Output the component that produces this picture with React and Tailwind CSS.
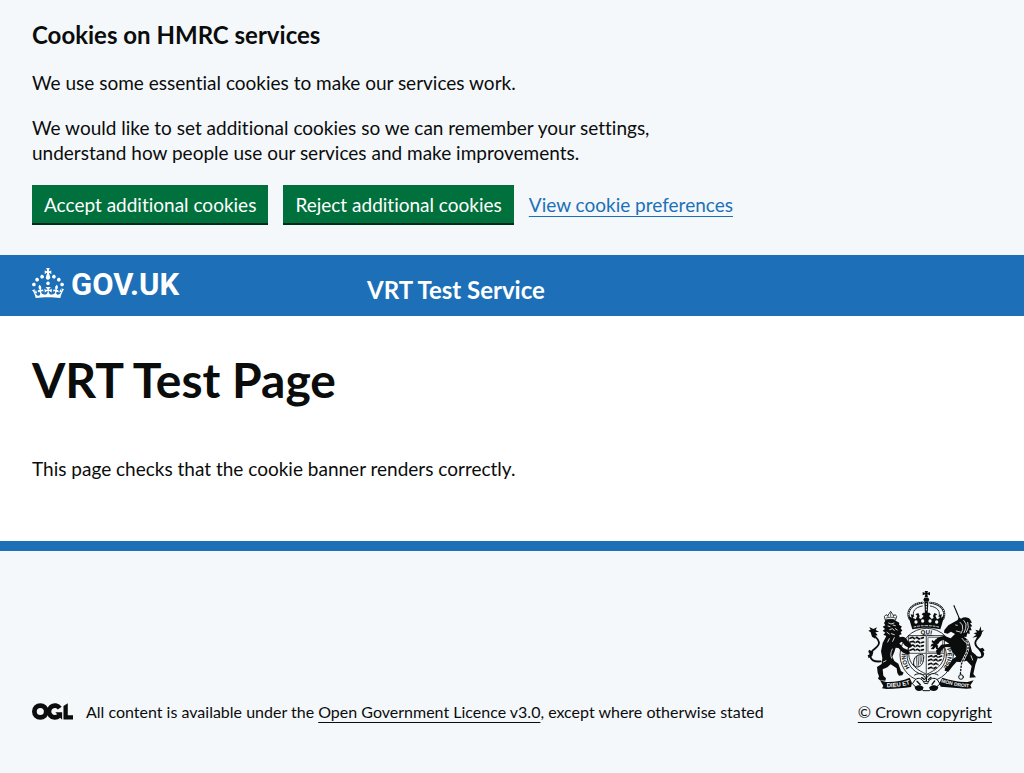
function Crown() {
  return (
    <svg viewBox="0 0 32 30" className="h-[30px] w-8 shrink-0" fill="currentColor" aria-hidden="true">
      <path
        fillRule="evenodd"
        d="M22.6 10.4c-1 .4-2-.1-2.4-1-.4-.9.1-2 1-2.4.9-.4 2 .1 2.4 1s-.1 2-1 2.4m-5.9 6.7c-.9.4-2-.1-2.4-1-.4-.9.1-2 1-2.4.9-.4 2 .1 2.4 1s-.1 2-1 2.4m10.8-3.7c-1 .4-2-.1-2.4-1-.4-.9.1-2 1-2.4.9-.4 2 .1 2.4 1s0 2-1 2.4m3.3 4.8c-1 .4-2-.1-2.4-1-.4-.9.1-2 1-2.4.9-.4 2 .1 2.4 1s-.1 2-1 2.4M17 4.7l2.3 1.2V2.5l-2.3.7-.2-.2.9-3h-3.4l.9 3-.2.2c-.1.1-2.3-.7-2.3-.7v3.4L15 4.7c.1.1.1.2.2.2l-1.3 4c-.1.2-.1.4-.1.6 0 1.1.8 2 1.9 2.2h.7c1-.2 1.9-1.1 1.9-2.1 0-.2 0-.4-.1-.6l-1.3-4c-.1-.2 0-.2.1-.3m-7.6 5.7c.9.4 2-.1 2.4-1 .4-.9-.1-2-1-2.4-.9-.4-2 .1-2.4 1s0 2 1 2.4m-5 3c.9.4 2-.1 2.4-1 .4-.9-.1-2-1-2.4-.9-.4-2 .1-2.4 1s.1 2 1 2.4m-3.2 4.8c.9.4 2-.1 2.4-1 .4-.9-.1-2-1-2.4-.9-.4-2 .1-2.4 1s0 2 1 2.4m14.8 11c4.4 0 8.6.3 12.3.8 1.1-4.5 2.4-7 3.7-8.8l-2.5-.9c.2 1.3.3 1.9 0 2.7-.4-.4-.8-1.1-1.1-2.3l-1.2 4c.7-.5 1.3-.8 2-.9-1.1 2.5-2.6 3.1-3.5 3-1.1-.2-1.7-1.2-1.5-2.1.3-1.2 1.5-1.5 2.1-.1 1.1-2.3-.8-3-2-2.3 1.9-1.9 2.1-3.5.6-5.6-2.1 1.6-2.1 3.2-1.2 5.5-1.2-1.4-3.2-.6-2.5 1.6.9-1.4 2.1-.5 1.9.8-.2 1.1-1.7 2.1-3.5 1.9-2.7-.2-2.9-2.1-2.9-3.6.7-.1 1.9.5 2.9 1.9l.4-4.3c-1.1 1.1-2.1 1.4-3.2 1.4.4-1.2 2.1-3 2.1-3h-5.4s1.7 1.9 2.1 3c-1.1 0-2.1-.2-3.2-1.4l.4 4.3c1-1.4 2.2-2 2.9-1.9-.1 1.5-.2 3.4-2.9 3.6-1.9.2-3.4-.8-3.5-1.9-.2-1.3 1-2.2 1.9-.8.7-2.3-1.2-3-2.5-1.6.9-2.2.9-3.9-1.2-5.5-1.5 2-1.3 3.7.6 5.6-1.2-.7-3.1 0-2 2.3.6-1.4 1.8-1.1 2.1 1.1.2.9-.3 1.9-1.5 2.1-.9.2-2.4-.5-3.5-3 .6 0 1.2.3 2 .9l-1.2-4c-.3 1.1-.7 1.9-1.1 2.3-.3-.8-.2-1.4 0-2.7l-2.9.9C1.3 23 2.6 25.5 3.7 30c3.7-.5 7.9-.8 12.3-.8"
      />
    </svg>
  );
}

/* Licence mark: a ring, an open ring with a spur, and an angled bar. */
function LicenceMark() {
  return (
    <svg viewBox="0 0 483 196" className="mb-[2px] h-[17px] w-[41px] shrink-0" fill="none" stroke="currentColor" strokeWidth="56" role="img" aria-label="Open Government Licence">
      <circle cx="98" cy="98" r="70" />
      <path d="M327 58A70 70 0 1 0 318 148" />
      <path stroke="none" fill="currentColor" d="M275 105.800h80v87.800h-3l-77-87.800zM370.800 32.400 421.500.1v142.700h61.700v50.700H370.800z" />
    </svg>
  );
}

/* One half of the crest's crown; the other half is its mirror image about x = 199. */
function CrownHalf() {
  return (
    <g>
      <path d="M188 53c-30 2-50 22-40 48" fill="none" strokeWidth="6" />
      <path d="M188 53c-30 2-50 22-40 48" fill="none" stroke="#f4f8fb" strokeWidth="3" strokeDasharray="1 5" />
      <path d="M187 63c-22 4-31 16-26 32" fill="none" strokeWidth="2.500" />
      <path d="M200 128c-15 0-30 2-43 5l-4-13-8-28 10 6-3-10 9 2-2 9 8 4 5-11-6-4 9-4 4 9-2 6 6 3 8-9-6-5 5-5h10z" />
      <circle cx="168" cy="111" r="5" fill="#f4f8fb" />
      <circle cx="188" cy="108" r="5" fill="#f4f8fb" />
      <path d="M162 126c11-3 24-4 37-4" fill="none" stroke="#f4f8fb" strokeWidth="2.500" strokeDasharray="6 5" />
    </g>
  );
}

function Crest() {
  return (
    <svg viewBox="6 15 375 306" className="h-[102px] w-[125px]" fill="#0b0c0c" stroke="#0b0c0c" strokeWidth="0" strokeLinecap="round" strokeLinejoin="round" aria-hidden="true">
      {/* garter */}
      <ellipse cx="200" cy="210" rx="80" ry="80" fill="#f4f8fb" strokeWidth="2.500" />
      <ellipse cx="200" cy="210" rx="59" ry="60" fill="#f4f8fb" strokeWidth="2.500" />
      <path id="garter" d="M164 262A63 63 0 1 1 236 262" fill="none" />
      <text className="font-['Liberation_Sans',sans-serif] text-[18px] font-bold"><textPath href="#garter" startOffset="20">HONI</textPath></text>
      <text className="font-['Liberation_Sans',sans-serif] text-[18px] font-bold"><textPath href="#garter" startOffset="142">QUI</textPath></text>
      <text className="font-['Liberation_Sans',sans-serif] text-[18px] font-bold"><textPath href="#garter" startOffset="238">PENSE</textPath></text>

      {/* crown */}
      <path d="M194 18h10l-2 6 8-3v10l-8-3 2 9h-10l2-9-8 3V21l8 3zM193 38h12l3 6-3 6h-12l-3-6z" />
      <path d="M193 50h12l-2 38h-8z" />
      <path d="M199 56v24" stroke="#f4f8fb" strokeWidth="3" strokeDasharray="3 5" />
      <CrownHalf />
      <g transform="matrix(-1 0 0 1 398 0)"><CrownHalf /></g>

      {/* shield */}
      <path d="M146 152h107v54c0 34-28 50-53 62-25-12-54-28-54-62z" fill="#f4f8fb" strokeWidth="2.500" />
      <g fill="none" strokeWidth="5">
        <path d="M150 160l8-3 5 4 8-4 6 5 13-4M150 171l10-2 5 4 9-4 6 5 11-3M150 183l9-3 6 5 8-4 6 4 11-3M150 196l10-4 5 4 8-3 6 4 11-3" />
        <path d="M206 215l8-3 6 4 8-4 6 5 11-4M206 226l8-3 6 4 8-4 6 5 9-4M206 238l8-3 6 4 8-4 6 4M206 250l8-3 6 4 8-4" />
      </g>
      <path d="M166 156v44M182 156v44M219 210v46M234 210v38" fill="none" stroke="#f4f8fb" strokeWidth="1.500" />
      <path d="M205 157h43v44h-43z" fill="#f4f8fb" stroke="#6f7273" strokeWidth="3" />
      <path d="M216 165l6 4 5-6 9 3-4 4 8-2-5 8-5 3 5 3-2 5 4 5-8 1-2-7-6 7-9-1 5-5 2-5-8 3 4-8 7-2-7-3z" />
      <path d="M161 239c-2-18 6-29 23-31 7 0 8 5 7 11-1 12-4 24-18 27-6 0-10-3-12-7z" fill="none" strokeWidth="3" />
      <path d="m169 214 2 28M174 212l2 29M180 211l1 25M186 210l-1 19" strokeWidth="2" />
      <path d="M199 152v113M148 205h104" stroke="#6f7273" strokeWidth="4" />

      {/* lion */}
      <path d="M76 105l-3-10 5-6 5 3 5-7 4-6 4 6 5 7 5-3 4 6-4 11c-10-4-20-4-30-1z" fill="#f4f8fb" strokeWidth="2.500" />
      <path d="M79 99c8-3 18-3 27 0M92 84v10M84 91v5M100 91v5" strokeWidth="2" fill="none" />
      <path d="M77 106c10-4 22-4 30 1l11 6-1 6 9 6-4 5 5 7-5 4 3 7-7 2 1 7c10-4 19 0 24 10l10 9 2 10-8 3-12-7-9-12-8 5 12 14 16 7 4 9-8 4-15-7-12-13-8-1-4 13-6 14 6 13 12 8 8 22 8 5-4 8-10 1-5-8-2-14-18-12-10 9-14 6 2 19 8 8-2 7-16-1-6-5 3-7-4-11-2-17 14-9 2-18-4-20 5-25 11-21-9-4 6-6-8-6 7-5-7-7 8-4-4-7z" />
      <path d="M86 114l7 3 9-3M84 123l6 2M99 120l7 2M89 134l8-3 6 5M81 142l7 5M106 131l6 4M94 146l9 3M88 161l-5 10M103 158l-5 11M97 192c-6 12-6 20-2 28M70 231l8-4" stroke="#f4f8fb" strokeWidth="2.500" fill="none" />
      <path d="M62 229c-20 2-31-4-31-18 0-19 27-21 26-39-1-12-13-16-20-27" strokeWidth="5.500" fill="none" />
      <path d="M28 126l12 6 11-5-4 8 10 5-11 2 7 9-9 1 2 9-10-6-4-13-7-5 7-3zM27 194l13 7-3 11-11 8-3-9 7-3-5-7z" />

      {/* unicorn */}
      <path d="M282 62l15 36" strokeWidth="3.500" strokeDasharray="6 2" />
      <path d="M293 105l3-9 7 5c9-6 20-5 27 2l6 10-6 1 7 10-6 1 4 11-7 0 1 11-7-2-3 11-8-1c10 6 17 13 19 23l6 22 11 9 6 11-7 19-6 28 8 10-19 1 1-11 5-24-15-16-16 5-14-2-11 12-14 18-11-3 1-7 9-6 13-21 12-8c-9-9-15-17-18-28l-17-1-12 14-1 10-10-1-3-12 16-18 24-3-19-12-13 8-8 10-8-6 12-18 20-6 20 8 13-13-12-7-10 6-11-3 1-8 12-14z" />
      <path d="M300 112l7 8 1 14-5 11M311 106l7 11-1 14-5 12M323 112l2 15-6 14M287 120l5 1M289 138l12 3M333 212l5 13M306 160l10 12" stroke="#f4f8fb" strokeWidth="2.500" fill="none" />
      <path d="M320 168c14 25-9 48-16 70l-3 30" stroke="#f4f8fb" strokeWidth="7" fill="none" />
      <path d="M320 168c14 25-9 48-16 70l-3 30" strokeWidth="4" strokeDasharray="4 6" fill="none" />
      <circle cx="303" cy="276" r="7" fill="#f4f8fb" strokeWidth="3" />
      <path d="M346 214c17 10 28-2 20-14-8-10-22-14-20-28 1-12 14-12 17-28" strokeWidth="5.500" fill="none" />
      <path d="M362 124l-5 13-11-3 5 8-10 3 8 4-12 9 14-3-3 8 12-8 4-11 8-8-8 1zM368 188l-13 5 7 10 3 14 8-11-4-6 5-4z" />

      {/* compartment */}
      <path d="M164 270c16-9 26-2 34 12 8-14 21-22 36-12" fill="#f4f8fb" strokeWidth="3" />
      <path d="M166 284c12-11 23 1 27 11l10 1c3-12 15-22 29-12l8 13-12 10-10-4-9 14h-20l-9-14-12 4-10-10z" fill="#f4f8fb" strokeWidth="3" />
      <path d="M164 306c10-9 23-5 27 2l-5 8c-11 4-21 1-22-10zM207 308c5-8 18-11 28-2-1 11-12 14-23 10z" />
      <path d="M171 289l10 10M224 288l-8 10M199 271v17M185 278l8 5M213 277l-8 7" strokeWidth="4" />

      {/* scrolls */}
      <path d="M60 286l18 5c25 1 48-3 71-13l7 16-3 12c-22 3-46 5-73 6l-14-2 4-7z" />
      <path d="M341 286l-18 5c-26 1-51-5-76-13l-9 16 4 11c27 2 52 4 78 6l15-1-4-9z" />
      <path id="scroll-left" d="M80 307c25 0 48-3 72-10" fill="none" />
      <path id="scroll-right" d="M243 292c26 7 51 14 85 15" fill="none" />
      <text fill="#f4f8fb" className="font-['Liberation_Sans',sans-serif] text-[18px] font-bold"><textPath href="#scroll-left" startOffset="0">DIEU ET</textPath></text>
      <text fill="#f4f8fb" className="font-['Liberation_Sans',sans-serif] text-[15px] font-bold"><textPath href="#scroll-right" startOffset="0">MON DROIT</textPath></text>
    </svg>
  );
}

const button =
  "h-[38px] px-3 bg-[#00703c] text-white text-[19px] leading-[19px] shadow-[0_2px_0_#002d18] cursor-pointer hover:bg-[#005a30]";
const link = "underline decoration-1 underline-offset-4";

export default function App() {
  return (
    <div className="flex min-h-screen flex-col bg-[#f4f8fb] font-['Lato',sans-serif] text-[19px] leading-[25px] text-[#0b0c0c] [font-variant-ligatures:none]">
      <section aria-label="Cookies on HMRC services" className="px-8 pt-5 pb-8">
        <div className="max-w-[640px]">
          <h2 className="mb-5 text-[24px] leading-[30px] font-bold">Cookies on HMRC services</h2>
          <p className="mb-5">We use some essential cookies to make our services work.</p>
          <p className="mb-5">
            We would like to set additional cookies so we can remember your settings, understand how people use our
            services and make improvements.
          </p>
        </div>
        <div className="flex flex-wrap items-center gap-[15px]">
          <button type="button" className={button}>Accept additional cookies</button>
          <button type="button" className={button}>Reject additional cookies</button>
          <a href="#preferences" className={`text-[#1d70b8] ${link}`}>View cookie preferences</a>
        </div>
      </section>

      <header className="flex bg-[#1d70b8] px-8 pt-[13px] pb-[11px] text-white">
        <div className="w-1/3 shrink-0">
          <a href="#home" aria-label="GOV.UK" className="flex items-start gap-[7px]">
            <Crown />
            <span className="font-['Roboto',sans-serif] text-[31px] leading-[34px] font-bold">GOV.UK</span>
          </a>
        </div>
        <a href="#service" className="ml-[15px] pt-[6px] text-[24px] leading-[31px] font-bold">VRT Test Service</a>
      </header>

      <main className="bg-white px-8 pt-[39px] pb-[60px]">
        <h1 className="mb-[51px] text-[48px] leading-[50px] font-bold">VRT Test Page</h1>
        <p>This page checks that the cookie banner renders correctly.</p>
      </main>

      <footer className="border-t-[10px] border-[#1d70b8] px-8 pt-[39px] pb-[50px] text-[16px] leading-5">
        <div className="flex items-end justify-between">
          <div className="flex items-center gap-[13px]">
            <LicenceMark />
            <span>
              All content is available under the{" "}
              <a href="#licence" className={link}>Open Government Licence v3.0</a>, except where otherwise stated
            </span>
          </div>
          <a href="#copyright" className="flex flex-col items-center gap-[10px]">
            <Crest />
            <span className={link}>© Crown copyright</span>
          </a>
        </div>
      </footer>
    </div>
  );
}
